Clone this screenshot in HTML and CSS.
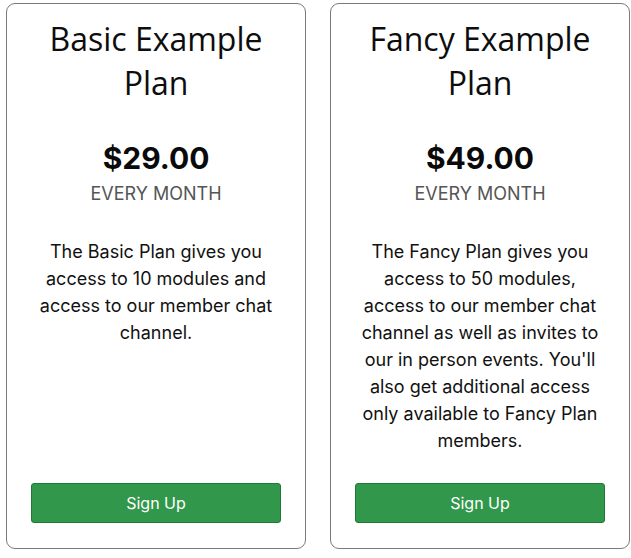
FILE: index.html
```html
<!DOCTYPE html>
<html>
<head>
<meta charset="utf-8">
<link rel="stylesheet" href="styles.css">
</head>
<body>
<div class="plans">
  <div class="card">
    <h2 class="title">Basic Example Plan</h2>
    <div class="price">$29.00</div>
    <div class="period">EVERY MONTH</div>
    <p class="desc">The Basic Plan gives you access to 10 modules and access to our member chat channel.</p>
    <button class="signup">Sign Up</button>
  </div>
  <div class="card">
    <h2 class="title">Fancy Example Plan</h2>
    <div class="price">$49.00</div>
    <div class="period">EVERY MONTH</div>
    <p class="desc">The Fancy Plan gives you access to 50 modules, access to our member chat channel as well as invites to our in person events. You'll also get additional access only available to Fancy Plan members.</p>
    <button class="signup">Sign Up</button>
  </div>
</div>
</body>
</html>
```
FILE: styles.css
```css
* { box-sizing: border-box; }
html, body { margin: 0; padding: 0; background: #fff; }
body { font-family: Inter, "Noto Sans", sans-serif; color: #111; }
.plans {
  display: flex;
  gap: 24px;
  padding: 3px 0 0 6px;
}
.card {
  width: 300px;
  height: 546px;
  border: 1px solid #7a7a7a;
  border-radius: 9px;
  padding: 13px 24px 25px;
  display: flex;
  flex-direction: column;
  align-items: center;
  text-align: center;
}
.title {
  margin: 0;
  font-family: "Open Sans", sans-serif;
  font-weight: 400;
  font-size: 32px;
  line-height: 44px;
  color: #0d0d0d;
}
.price {
  margin-top: 36px;
  font-family: Inter, sans-serif;
  font-weight: 700;
  font-size: 30px;
  line-height: 34px;
  color: #0a0a0a;
}
.period {
  margin-top: 8px;
  font-size: 18px;
  line-height: 22px;
  color: #555;
}
.desc {
  margin: 33px 0 0;
  max-width: 246px;
  font-size: 18px;
  line-height: 27px;
  color: #111;
}
.signup {
  margin-top: auto;
  width: 250px;
  height: 40px;
  background: #31974a;
  border: 1px solid #1f7a37;
  border-radius: 3px;
  color: #fff;
  font-family: Inter, sans-serif;
  font-size: 16px;
}
```
